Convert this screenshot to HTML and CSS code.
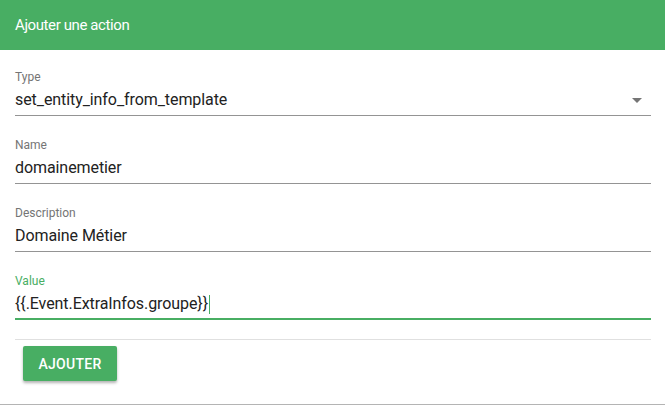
FILE: index.html
```html
<!DOCTYPE html>
<html lang="fr">
<head>
<meta charset="utf-8">
<link rel="stylesheet" href="styles.css">
</head>
<body>
<div class="dialog">
  <header class="dialog-header">Ajouter une action</header>
  <div class="form">
    <div class="field">
      <div class="label">Type</div>
      <div class="control select">
        <span class="value">set_entity_info_from_template</span>
        <span class="arrow"></span>
      </div>
    </div>
    <div class="field">
      <div class="label">Name</div>
      <div class="control"><span class="value">domainemetier</span></div>
    </div>
    <div class="field">
      <div class="label">Description</div>
      <div class="control"><span class="value">Domaine Métier</span></div>
    </div>
    <div class="field focused">
      <div class="label">Value</div>
      <div class="control"><span class="value">{{.Event.ExtraInfos.groupe}}</span><span class="caret"></span></div>
    </div>
    <div class="actions">
      <button class="btn">AJOUTER</button>
    </div>
  </div>
</div>
</body>
</html>
```

FILE: styles.css
```css
html, body {
  margin: 0;
  padding: 0;
  background: #fff;
}
body {
  font-family: Roboto, "Liberation Sans", sans-serif;
  width: 665px;
  height: 405px;
  overflow: hidden;
}
.dialog {
  height: 404px;
  border-bottom: 1px solid #b4b4b4;
  display: flex;
  flex-direction: column;
}
.dialog-header {
  height: 50px;
  background: #48ae63;
  color: #fff;
  font-size: 15px;
  letter-spacing: -0.4px;
  line-height: 50px;
  padding-left: 15px;
  box-sizing: border-box;
  padding-bottom: 2px;
}
.form {
  padding: 20px 14px 0 15px;
  display: flex;
  flex-direction: column;
}
.field {
  display: flex;
  flex-direction: column;
  margin-bottom: 22px;
}
.label {
  font-size: 12px;
  line-height: 14px;
  color: #757575;
}
.control {
  margin-top: 6px;
  height: 25px;
  display: flex;
  align-items: flex-start;
  border-bottom: 1px solid #949494;
  position: relative;
}
.value {
  font-size: 16px;
  line-height: 20px;
  color: #222;
  letter-spacing: -0.08px;
}
.select .arrow {
  position: absolute;
  right: 9px;
  top: 8px;
  width: 0;
  height: 0;
  border-left: 5px solid transparent;
  border-right: 5px solid transparent;
  border-top: 5px solid #757575;
}
.focused {
  margin-bottom: 19px;
}
.focused .label {
  color: #48ae63;
}
.focused .control {
  height: 24px;
  border-bottom: 2px solid #48ae63;
}
.caret {
  width: 1px;
  height: 19px;
  background: #48ae63;
  margin-left: 1px;
  margin-top: 1px;
}
.actions {
  border-top: 1px solid #e0e0e0;
  padding: 6px 0 0 8px;
  display: flex;
}
.btn {
  width: 94px;
  height: 35px;
  border: none;
  border-radius: 2px;
  background: #48ae63;
  color: #fff;
  font-family: Roboto, "Liberation Sans", sans-serif;
  font-weight: 500;
  font-size: 14px;
  letter-spacing: 0.3px;
  box-shadow: 0 2px 3px rgba(0,0,0,0.3);
  padding: 0;
}
```
